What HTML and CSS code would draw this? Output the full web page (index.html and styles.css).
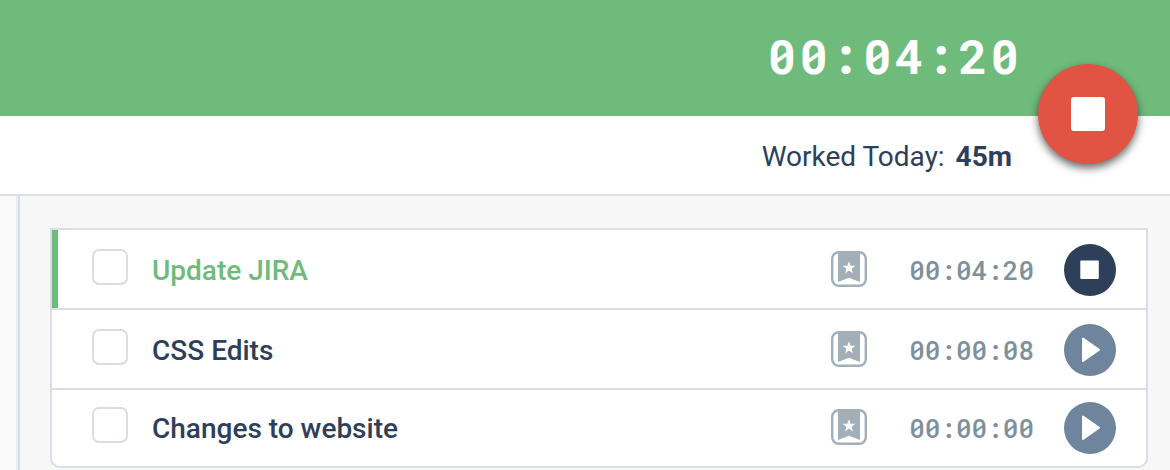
FILE: index.html
```html
<!DOCTYPE html>
<html lang="en">
<head>
<meta charset="utf-8">
<meta name="viewport" content="width=device-width, initial-scale=1">
<title>Time tracker</title>
<link rel="stylesheet" href="styles.css">
</head>
<body>
<svg class="symbols" aria-hidden="true">
  <symbol id="bookmark" viewBox="0 0 36 36">
    <rect x="1.2" y="1.2" width="33.6" height="33.6" rx="6.5" fill="#fff" stroke="#a2afb8" stroke-width="2.4"/>
    <path fill="#a2afb8" d="M7 1h22v30l-11-4.300-11 4.300z"/>
    <path fill="#fff" d="M18 10.200l1.600 4.600h4.800l-3.800 2.900 1.400 4.700-4-2.800-4 2.800 1.400-4.700-3.800-2.900h4.800z"/>
  </symbol>
  <symbol id="play" viewBox="0 0 52 52">
    <path fill="#fff" stroke="#fff" stroke-width="2" stroke-linejoin="round" d="M19 14.500v22.500l16-11.300z"/>
  </symbol>
  <symbol id="stop" viewBox="0 0 52 52">
    <rect x="16.300" y="16.500" width="18.500" height="18.500" rx="1" fill="#fff"/>
  </symbol>
</svg>
<header class="timer">
  <time class="timer-clock">00:04:20</time>
  <button class="timer-stop" type="button" aria-label="Stop timer"><span class="timer-stop-icon"></span></button>
</header>
<section class="summary"><p class="worked">Worked Today: <strong class="worked-total">45m</strong></p></section>
<div class="content">
  <aside class="sidebar"></aside>
  <main class="main">
    <ul class="tasks">
      <li class="task task-active">
        <input class="task-check" type="checkbox" id="task-1">
        <label class="task-name" for="task-1">Update JIRA</label>
        <svg class="task-project" aria-hidden="true"><use href="#bookmark"/></svg>
        <time class="task-time">00:04:20</time>
        <button class="task-button" type="button" aria-label="Stop Update JIRA"><svg class="task-icon"><use href="#stop"/></svg></button>
      </li>
      <li class="task">
        <input class="task-check" type="checkbox" id="task-2">
        <label class="task-name" for="task-2">CSS Edits</label>
        <svg class="task-project" aria-hidden="true"><use href="#bookmark"/></svg>
        <time class="task-time">00:00:08</time>
        <button class="task-button" type="button" aria-label="Start CSS Edits"><svg class="task-icon"><use href="#play"/></svg></button>
      </li>
      <li class="task">
        <input class="task-check" type="checkbox" id="task-3">
        <label class="task-name" for="task-3">Changes to website</label>
        <svg class="task-project" aria-hidden="true"><use href="#bookmark"/></svg>
        <time class="task-time">00:00:00</time>
        <button class="task-button" type="button" aria-label="Start Changes to website"><svg class="task-icon"><use href="#play"/></svg></button>
      </li>
    </ul>
  </main>
</div>
</body>
</html>
```
FILE: styles.css
```css
* { box-sizing: border-box; }

body {
  margin: 0;
  min-height: 100vh;
  display: flex;
  flex-direction: column;
  background: #fff;
  color: #2e4059;
  font-family: Roboto, "Liberation Sans", sans-serif;
  font-size: 28px;
  line-height: 36px;
}

.symbols { display: none; }

.timer {
  display: flex;
  justify-content: flex-end;
  align-items: flex-start;
  gap: 16px;
  height: 116px;
  padding: 24px 32px 0 0;
  background: #6fbb7b;
}

.timer-clock {
  color: #fff;
  font-family: "Roboto Mono", "Liberation Mono", monospace;
  font-size: 48px;
  font-weight: 700;
  letter-spacing: 3px;
  line-height: 64px;
}

.timer-stop {
  flex: none;
  display: grid;
  place-items: center;
  width: 100px;
  height: 100px;
  margin-top: 40px;
  padding: 0;
  border: 0;
  border-radius: 50%;
  background: #e15343;
  box-shadow: 0 4px 8px rgba(0, 0, 0, 0.6);
  z-index: 1;
}

.timer-stop-icon {
  width: 34px;
  height: 34px;
  border-radius: 3px;
  background: #fff;
}

.summary {
  padding: 23px 158px 19px 32px;
  border-bottom: 2px solid #d8dde7;
  text-align: right;
}

.worked { margin: 0; }

.worked-total {
  margin-left: 4px;
  font-weight: 700;
}

.content {
  flex: 1;
  display: flex;
}

.sidebar {
  flex: none;
  width: 20px;
  border-right: 2px solid #d8dde7;
  background: #fafafa;
  box-shadow: inset -2px 0 #ebedf0;
}

.main {
  flex: 1;
  padding: 32px 22px 2px 30px;
  background: #f7f7f7;
}

.tasks {
  margin: 0;
  padding: 0;
  list-style: none;
  border: 2px solid #d8dde7;
  border-radius: 0 0 10px 10px;
  background: #fff;
}

.task {
  display: flex;
  align-items: center;
  padding: 14px 30px 12px 40px;
}

.task + .task { border-top: 2px solid #d8dde7; }

.task:last-child { padding-top: 12px; }

.task-active {
  padding-left: 34px;
  border-left: 6px solid #6fbb7b;
}

.task-check {
  appearance: none;
  flex: none;
  width: 36px;
  height: 36px;
  margin: 0 24px 6px 0;
  border: 2px solid #d8dde7;
  border-radius: 7px;
  background: #fff;
}

.task-name {
  flex: 1;
  padding-top: 2px;
  font-weight: 500;
}

.task-active .task-name { color: #6fbb7b; }

.task-project {
  flex: none;
  width: 36px;
  height: 36px;
  margin: 0 42px 2px 0;
}

.task-time {
  margin-right: 30px;
  color: #7d909b;
  font-family: "Roboto Mono", "Liberation Mono", monospace;
  font-size: 26px;
  font-weight: 500;
}

.task-button {
  flex: none;
  width: 52px;
  height: 52px;
  padding: 0;
  border: 0;
  border-radius: 50%;
  background: #6f859e;
}

.task-active .task-button { background: #2e4059; }

.task-icon {
  display: block;
  width: 52px;
  height: 52px;
}
```
